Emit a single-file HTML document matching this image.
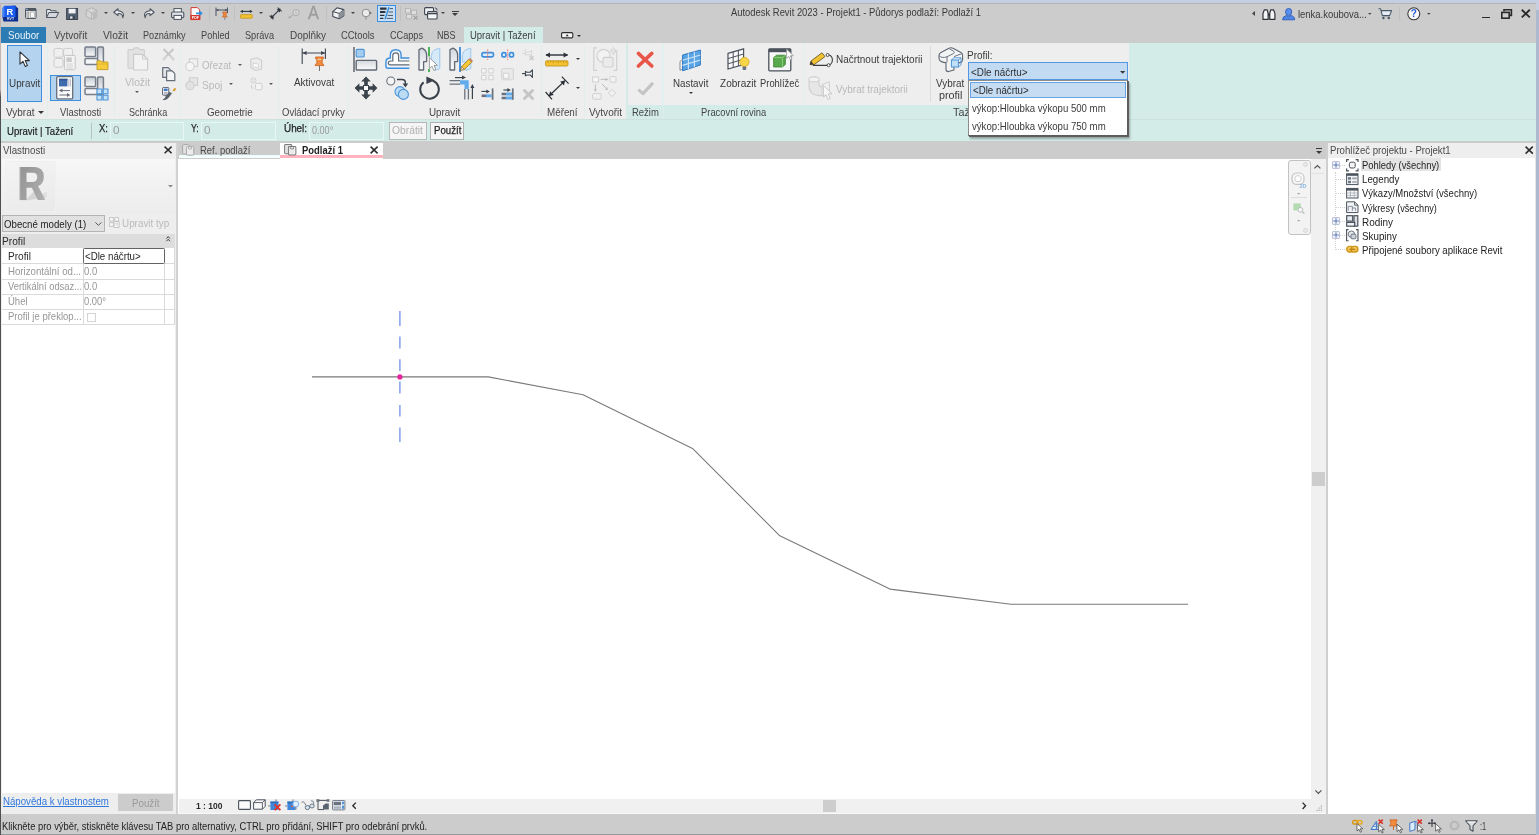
<!DOCTYPE html>
<html lang="cs">
<head>
<meta charset="utf-8">
<title>Autodesk Revit 2023 - Projekt1 - Půdorys podlaží: Podlaží 1</title>
<style>
html,body{margin:0;padding:0}
body{width:1539px;height:835px;position:relative;overflow:hidden;background:#fff;font-family:"Liberation Sans",sans-serif;font-size:10.5px;color:#3c3c3c;line-height:12px}
.a{position:absolute}
.t{position:absolute;white-space:nowrap;line-height:12px;transform-origin:0 0}
svg{position:absolute;overflow:visible}
svg.i{filter:blur(.3px)}
#topband{left:0;top:0;width:1539px;height:3px;background:#c6cfe1}
#titlebar{left:0;top:3px;width:1539px;height:40px;background:#cccccc;border-top:1px solid #b4b4b4;box-sizing:border-box}
#ribbon{left:1px;top:42.6px;width:1535px;height:76.4px;background:#d4ece8}
#optbar{left:1px;top:119px;width:1535px;height:22.3px;background:#d4ece8}
#optline{left:1px;top:141.3px;width:1535px;height:2px;background:#cbcbcb}
#ledge{left:0;top:3px;width:1.1px;height:832px;background:linear-gradient(#c4b4b0 0,#c4b4b0 86px,#505050 94px,#505050 100%)}
#redge{left:1536px;top:0;width:3px;height:835px;background:linear-gradient(#c6d0e2 0,#c6d0e2 10px,#adb9cf 10px,#adb9cf 100%)}
</style>
</head>
<body>
<div class="a" id="topband"></div>
<div class="a" id="titlebar"></div>
<div class="a" id="ribbon"></div>
<div class="a" id="optbar"></div>
<div class="a" id="optline"></div>
<!-- sec_title -->
<div class="t" style="left:730.6px;top:5.6px;font-size:10.5px;color:#3a3a3a;transform:scaleX(0.896);">Autodesk Revit 2023 - Projekt1 - Půdorys podlaží: Podlaží 1</div>
<svg class="i" style="left:2.4px;top:4.7px;" width="16.6" height="16.9" viewBox="0 0 17 17" preserveAspectRatio="none"><path d="M2 1.5 L13.5 0.5 L16.5 3.5 V16.5 H1.5 L0.5 12 Z" fill="#0c2f8f"/><path d="M0.5 3 L2.5 0.8 H13.8 V12 H0.5Z" fill="#1a5cf0"/><path d="M0.5 3 L2.5 0.8 V12 H0.5Z" fill="#4a86f7"/><text x="8" y="10" font-family="Liberation Sans,sans-serif" font-weight="bold" font-size="9.5" fill="#fff" text-anchor="middle">R</text><text x="8.8" y="15.6" font-family="Liberation Sans,sans-serif" font-weight="bold" font-size="3.6" fill="#dfe8ff" text-anchor="middle">RVT</text></svg>
<svg class="i" style="left:24.5px;top:8.0px;" width="11.5" height="11.0" viewBox="0 0 12 11" preserveAspectRatio="none"><rect x="0.5" y="0.5" width="11" height="10" rx="1" fill="#e8e8e8" stroke="#4d5560"/><rect x="0.5" y="0.5" width="11" height="2.4" fill="#4d5560"/><rect x="1" y="0.9" width="2" height="1" fill="#7db4e8"/><rect x="2" y="4" width="2" height="5.6" fill="#d0d0d0" stroke="#777" stroke-width=".5"/><rect x="5.5" y="4" width="4.5" height="5.6" fill="#f8f8f8" stroke="#888" stroke-width=".5"/></svg>
<svg class="i" style="left:46.0px;top:9.3px;" width="13.2" height="9.0" viewBox="0 0 13 9" preserveAspectRatio="none"><path d="M0.6 8.4V1.2Q0.6.6 1.2.6H4L5 1.8H9.4Q10 1.8 10 2.4V3.4" fill="#e4e6ea" stroke="#4d5560" stroke-width="1"/><path d="M0.6 8.4L3 3.4H12.5L10 8.4Z" fill="#d4d8de" stroke="#4d5560" stroke-width="1" stroke-linejoin="round"/></svg>
<svg class="i" style="left:65.5px;top:7.5px;" width="12.2" height="12.0" viewBox="0 0 12 12" preserveAspectRatio="none"><path d="M0.6 0.6H11.4V11.4H0.6Z" fill="#566274" stroke="#3e4652" stroke-width="1"/><rect x="2.6" y="0.8" width="6.8" height="4.6" fill="#f0f2f5"/><rect x="3.2" y="7.6" width="5.6" height="3.6" fill="#3e4652"/><rect x="4" y="8.4" width="2.4" height="2.2" fill="#e8eaee"/></svg>
<svg class="i" style="left:84.5px;top:7.0px;" width="13.0" height="13.0" viewBox="0 0 13 13" preserveAspectRatio="none"><path d="M6.5 0.8L11.8 3.2V9.4L6.5 12.2L1.2 9.4V3.2Z" fill="#d6d6d6" stroke="#b2b2b2" stroke-width="1"/><path d="M1.2 3.2L6.5 5.8L11.8 3.2M6.5 5.8V12.2" fill="none" stroke="#b2b2b2" stroke-width=".8"/><path d="M7 6.5L11.5 4.5V11.5L9 12.5Z" fill="#bcbcbc"/></svg>
<svg style="left:103.6px;top:12.2px" width="4.0" height="2.0" viewBox="0 0 4 2.0"><path d="M0 0H4L2.0 2.0Z" fill="#444"/></svg>
<svg class="i" style="left:113.0px;top:8.0px;" width="13.0" height="10.5" viewBox="0 0 13 10.5" preserveAspectRatio="none"><path d="M5 0.8L0.8 4.2L5 7.6V5.6Q9.6 5 9.8 9.8Q12.6 3.6 5 2.8Z" fill="#eceef0" stroke="#4d5560" stroke-width="1.1" stroke-linejoin="round"/></svg>
<svg style="left:131.4px;top:12.2px" width="4.0" height="2.0" viewBox="0 0 4 2.0"><path d="M0 0H4L2.0 2.0Z" fill="#444"/></svg>
<svg class="i" style="left:142.4px;top:8.0px;" width="13.0" height="10.5" viewBox="0 0 13 10.5" preserveAspectRatio="none"><path d="M8 0.8L12.2 4.2L8 7.6V5.6Q3.4 5 3.2 9.8Q0.4 3.6 8 2.8Z" fill="#eceef0" stroke="#4d5560" stroke-width="1.1" stroke-linejoin="round"/></svg>
<svg style="left:160.5px;top:12.2px" width="4.0" height="2.0" viewBox="0 0 4 2.0"><path d="M0 0H4L2.0 2.0Z" fill="#444"/></svg>
<svg class="i" style="left:170.6px;top:7.5px;" width="13.4" height="12.0" viewBox="0 0 13.4 12" preserveAspectRatio="none"><rect x="3" y="0.6" width="7.4" height="4" fill="#fafafa" stroke="#4d5560" stroke-width="1"/><rect x="0.6" y="4" width="12.2" height="5.6" rx="1.2" fill="#dfe2e6" stroke="#4d5560" stroke-width="1.1"/><rect x="3" y="7.4" width="7.4" height="4" fill="#fafafa" stroke="#4d5560" stroke-width="1"/></svg>
<svg class="i" style="left:190.0px;top:6.8px;" width="13.0" height="13.2" viewBox="0 0 13 13.2" preserveAspectRatio="none"><path d="M1 0.6H7.4L9.6 2.8V12.6H1Z" fill="#fdfdfd" stroke="#d23b2e" stroke-width="1"/><rect x="0.4" y="8" width="10" height="4.8" fill="#d6342a"/><text x="5.4" y="12" font-family="Liberation Sans,sans-serif" font-weight="bold" font-size="3.6" fill="#fff" text-anchor="middle">PDF</text><path d="M6 5.4H9.6V3.6L12.8 6.3L9.6 9V7.2H6Z" fill="#2f8fe0"/></svg>
<div class="a" style="left:209.3px;top:6.0px;width:1.0px;height:15.0px;background:#c0c0c0;"></div>
<svg class="i" style="left:215.0px;top:6.5px;" width="13.5" height="13.5" viewBox="0 0 13.5 13.5" preserveAspectRatio="none"><path d="M1 0.5V9M12.5 0.5V6M1 3H12.5" stroke="#4d5560" stroke-width="1" fill="none"/><path d="M1 3L3.4 1.8V4.2ZM12.5 3L10.1 1.8V4.2Z" fill="#4d5560"/><path d="M7.6 5H12V6H11.2V8.4L12.4 10H7.2L8.4 8.4V6H7.6Z" fill="#f08a3c" stroke="#c8601e" stroke-width=".6"/><path d="M9.8 10V13" stroke="#777" stroke-width=".8"/></svg>
<div class="a" style="left:234.0px;top:6.0px;width:1.0px;height:15.0px;background:#c0c0c0;"></div>
<svg class="i" style="left:240.0px;top:8.5px;" width="12.8" height="10.0" viewBox="0 0 12.8 10" preserveAspectRatio="none"><path d="M0.6 2.4H12.2" stroke="#30363e" stroke-width="1.1"/><path d="M0.3 2.4L3 0.8V4ZM12.5 2.4L9.8 0.8V4Z" fill="#30363e"/><rect x="0.5" y="5.6" width="11.8" height="3.6" rx=".6" fill="#f2c230" stroke="#c8961a" stroke-width=".8"/></svg>
<svg style="left:258.8px;top:12.2px" width="4.0" height="2.0" viewBox="0 0 4 2.0"><path d="M0 0H4L2.0 2.0Z" fill="#444"/></svg>
<svg class="i" style="left:268.8px;top:7.0px;" width="13.2" height="13.0" viewBox="0 0 13 13" preserveAspectRatio="none"><path d="M2.4 10.6L10.6 2.4" stroke="#30363e" stroke-width="1.1"/><path d="M0.6 8.6L4.4 12.4M8.6 0.6L12.4 4.4" stroke="#30363e" stroke-width="1"/><path d="M1.6 11.4L2.4 7.6L5.4 10.6ZM11.4 1.6L10.6 5.4L7.6 2.4Z" fill="#30363e"/></svg>
<svg class="i" style="left:288.0px;top:8.5px;" width="12.0" height="10.0" viewBox="0 0 12 10" preserveAspectRatio="none"><circle cx="8" cy="3.6" r="3.1" fill="#d8d8d8" stroke="#a8a8a8" stroke-width=".9"/><path d="M5.4 5.6L1.4 8.6" stroke="#a8a8a8" stroke-width="1"/><path d="M0.4 9.6L1 6.8L3.2 8.8Z" fill="#a8a8a8"/><text x="8" y="5.2" font-family="Liberation Sans,sans-serif" font-size="4.4" fill="#999" text-anchor="middle">1</text></svg>
<div class="t" style="left:307.6px;top:4.3px;font-size:17.5px;line-height:18px;color:#9c9c9c;transform:scaleX(.93);-webkit-text-stroke:.3px #9c9c9c">A</div>
<div class="a" style="left:326.0px;top:6.0px;width:1.0px;height:15.0px;background:#c0c0c0;"></div>
<svg class="i" style="left:331.8px;top:7.0px;" width="12.6" height="12.6" viewBox="0 0 12.6 12.6" preserveAspectRatio="none"><path d="M0.8 4.6L5 0.8L11.8 2.6V8.8L7.2 11.8L0.8 9.6Z" fill="#f2f2f2" stroke="#3e4652" stroke-width="1.1" stroke-linejoin="round"/><path d="M0.8 4.6L7.2 6.4L11.8 2.6M7.2 6.4V11.8" fill="none" stroke="#3e4652" stroke-width="1"/><path d="M7.2 6.4L11.8 2.6V8.8L7.2 11.8Z" fill="#8a9098"/></svg>
<svg style="left:351.0px;top:12.2px" width="4.0" height="2.0" viewBox="0 0 4 2.0"><path d="M0 0H4L2.0 2.0Z" fill="#444"/></svg>
<svg class="i" style="left:360.5px;top:7.5px;" width="11.5" height="12.0" viewBox="0 0 11.5 12" preserveAspectRatio="none"><circle cx="5" cy="5" r="3.8" fill="#ececec" stroke="#8c8c8c" stroke-width="1"/><path d="M8.6 3.4L11 5L8.6 6.6Z" fill="#707070"/><path d="M5 8.8V11.6" stroke="#8c8c8c" stroke-width="1"/></svg>
<div class="a" style="left:377.0px;top:4.5px;width:19.0px;height:17.0px;background:#c9e0f7;box-sizing:border-box;border:1px solid #3b8fe0;"></div>
<svg class="i" style="left:380.0px;top:7.0px;" width="13.2" height="12.2" viewBox="0 0 13.2 12.2" preserveAspectRatio="none"><path d="M0 1.6H6.5M0 5H5.4" stroke="#2c3138" stroke-width="2.2"/><path d="M0 8.4H4.4M0 11.4H3.4" stroke="#2c3138" stroke-width="1.2"/><path d="M9.6 1.6H13M8.6 5H13M7.6 8.4H13M6.6 11.4H13" stroke="#2c3138" stroke-width=".8"/><path d="M9 0L5 12.2" stroke="#2f8fe0" stroke-width="1.4"/></svg>
<div class="a" style="left:400.0px;top:6.0px;width:1.0px;height:15.0px;background:#c0c0c0;"></div>
<svg class="i" style="left:405.0px;top:7.5px;" width="13.5" height="12.0" viewBox="0 0 13.5 12" preserveAspectRatio="none"><rect x="0.5" y="0.5" width="5" height="4.4" fill="#dedede" stroke="#b0b0b0" stroke-width=".8"/><rect x="6.6" y="2.2" width="5" height="4.4" fill="#dedede" stroke="#b0b0b0" stroke-width=".8"/><rect x="1.4" y="6.4" width="5" height="4.4" fill="#dedede" stroke="#b0b0b0" stroke-width=".8"/><path d="M8.6 8L12.6 11.6M12.6 8L8.6 11.6" stroke="#a0a0a0" stroke-width="1.1"/></svg>
<svg class="i" style="left:423.5px;top:6.8px;" width="13.9" height="12.8" viewBox="0 0 14 12.8" preserveAspectRatio="none"><rect x="0.6" y="0.6" width="9" height="7" rx="1" fill="#eef0f2" stroke="#3e4652" stroke-width="1.1"/><rect x="3.6" y="4.6" width="9.6" height="7.4" rx="1" fill="#f6f7f8" stroke="#3e4652" stroke-width="1.1"/><path d="M3.6 6.6H13.2" stroke="#3e4652" stroke-width="1.4"/><path d="M11 0.8Q13.4 1 13.2 3.4" fill="none" stroke="#3e4652" stroke-width=".9"/></svg>
<svg style="left:441.3px;top:12.2px" width="4.0" height="2.0" viewBox="0 0 4 2.0"><path d="M0 0H4L2.0 2.0Z" fill="#444"/></svg>
<div class="a" style="left:452.0px;top:10.6px;width:6.6px;height:1.2px;background:#3c3c3c;"></div>
<svg style="left:452.3px;top:13.1px" width="6.0" height="3.0" viewBox="0 0 6 3.0"><path d="M0 0H6L3.0 3.0Z" fill="#3c3c3c"/></svg>
<svg style="left:1252.4px;top:10.6px" width="3" height="5" viewBox="0 0 3 5"><path d="M3 0V5L0 2.5Z" fill="#444"/></svg>
<svg class="i" style="left:1261.7px;top:8.5px;" width="13.9" height="11.0" viewBox="0 0 14 11" preserveAspectRatio="none"><path d="M1 10.4V4.4L2.4 0.8H5.2L6.2 4.4V10.4ZM7.8 10.4V4.4L8.8 0.8H11.6L13 4.4V10.4Z" fill="#f4f4f4" stroke="#2c3138" stroke-width="1.2" stroke-linejoin="round"/><path d="M6.2 4.2H7.8V7H6.2Z" fill="#2c3138"/></svg>
<svg class="i" style="left:1281.7px;top:7.6px;" width="13.3" height="12.2" viewBox="0 0 13.3 12.2" preserveAspectRatio="none"><path d="M0.6 11.8Q0.6 8.2 4.6 7.4L6.6 8.8L8.6 7.4Q12.7 8.2 12.7 11.8Z" fill="#4f86e8" stroke="#2552b0" stroke-width=".8"/><ellipse cx="6.65" cy="3.9" rx="3.1" ry="3.5" fill="#5a90f0" stroke="#2552b0" stroke-width=".8"/></svg>
<div class="t" style="left:1298.1px;top:7.6px;font-size:10.5px;color:#3a3a3a;transform:scaleX(0.900);">lenka.koubova...</div>
<svg style="left:1367.8px;top:12.5px" width="3.6" height="1.8" viewBox="0 0 3.6 1.8"><path d="M0 0H3.6L1.8 1.8Z" fill="#444"/></svg>
<svg class="i" style="left:1378.0px;top:8.0px;" width="14.6" height="11.6" viewBox="0 0 14.6 11.6" preserveAspectRatio="none"><path d="M0.4 0.8H2.6L4.4 7.6H11.6L13.6 2.6H3.2" fill="#e8eef8" stroke="#4a5868" stroke-width="1.1" stroke-linejoin="round"/><circle cx="5.4" cy="10" r="1.2" fill="#4a5868"/><circle cx="10.8" cy="10" r="1.2" fill="#4a5868"/></svg>
<div class="a" style="left:1399.4px;top:7.0px;width:1.0px;height:13.0px;background:#c0c0c0;"></div>
<svg class="i" style="left:1406.6px;top:7.4px;" width="13.6" height="13.6" viewBox="0 0 13.6 13.6" preserveAspectRatio="none"><circle cx="6.8" cy="6.8" r="6" fill="#f8f8f8" stroke="#3a3a3a" stroke-width="1.1"/><text x="6.8" y="10.4" font-family="Liberation Sans,sans-serif" font-weight="bold" font-size="10" fill="#2a62d8" text-anchor="middle">?</text></svg>
<svg style="left:1426.6px;top:12.5px" width="3.6" height="1.8" viewBox="0 0 3.6 1.8"><path d="M0 0H3.6L1.8 1.8Z" fill="#444"/></svg>
<div class="a" style="left:1482.0px;top:16.8px;width:7.6px;height:1.7px;background:#2a2a2a;"></div>
<svg class="i" style="left:1500.8px;top:8.6px;" width="11.2" height="10.0" viewBox="0 0 11.2 10" preserveAspectRatio="none"><path d="M3 2.6V0.8H10.4V6.4H8.4" fill="none" stroke="#2a2a2a" stroke-width="1.6"/><rect x="0.8" y="3.4" width="7.4" height="5.8" fill="none" stroke="#2a2a2a" stroke-width="1.6"/></svg>
<svg class="i" style="left:1521.3px;top:9.0px;" width="9.6" height="9.2" viewBox="0 0 9.6 9.2" preserveAspectRatio="none"><path d="M0.8 0.8L8.8 8.4M8.8 0.8L0.8 8.4" stroke="#2a2a2a" stroke-width="1.9"/></svg>
<!-- sec_tabs -->
<div class="a" style="left:1.0px;top:27.0px;width:45.0px;height:15.5px;background:#2b7cb5;"></div>
<div class="t" style="left:7.5px;top:29.0px;font-size:10.5px;color:#eaf3fa;transform:scaleX(0.926);">Soubor</div>
<div class="t" style="left:54.4px;top:29.0px;font-size:10.5px;color:#454545;transform:scaleX(0.961);">Vytvořit</div>
<div class="t" style="left:103.0px;top:29.0px;font-size:10.5px;color:#454545;transform:scaleX(0.980);">Vložit</div>
<div class="t" style="left:143.0px;top:29.0px;font-size:10.5px;color:#454545;transform:scaleX(0.870);">Poznámky</div>
<div class="t" style="left:200.8px;top:29.0px;font-size:10.5px;color:#454545;transform:scaleX(0.879);">Pohled</div>
<div class="t" style="left:245.3px;top:29.0px;font-size:10.5px;color:#454545;transform:scaleX(0.873);">Správa</div>
<div class="t" style="left:289.8px;top:29.0px;font-size:10.5px;color:#454545;transform:scaleX(0.950);">Doplňky</div>
<div class="t" style="left:341.1px;top:29.0px;font-size:10.5px;color:#454545;transform:scaleX(0.896);">CCtools</div>
<div class="t" style="left:389.6px;top:29.0px;font-size:10.5px;color:#454545;transform:scaleX(0.869);">CCapps</div>
<div class="t" style="left:437.0px;top:29.0px;font-size:10.5px;color:#454545;transform:scaleX(0.859);">NBS</div>
<div class="a" style="left:464.0px;top:27.0px;width:79.0px;height:16.4px;background:#d4ece8;"></div>
<div class="t" style="left:470.2px;top:29.0px;font-size:10.5px;color:#3c3c3c;transform:scaleX(0.903);">Upravit | Tažení</div>
<svg class="i" style="left:561.0px;top:32.3px;" width="12.4" height="6.5" viewBox="0 0 12.4 6.5" preserveAspectRatio="none"><rect x="0.6" y="0.6" width="11.2" height="5.3" rx="1.2" fill="#f4f4f4" stroke="#2c2c2c" stroke-width="1.1"/><path d="M4.6 4.2H7.8L6.2 2.2Z" fill="#2c2c2c"/></svg>
<svg style="left:577.4px;top:34.8px" width="4.0" height="2.0" viewBox="0 0 4 2.0"><path d="M0 0H4L2.0 2.0Z" fill="#2c2c2c"/></svg>
<!-- sec_ribbon -->
<div class="a" style="left:1.0px;top:43.4px;width:625.0px;height:75.6px;background:#eeeeee;"></div>
<div class="a" style="left:47.2px;top:45.0px;width:1.0px;height:72.0px;background:#e2eeec;"></div>
<div class="a" style="left:113.8px;top:45.0px;width:1.0px;height:72.0px;background:#e2eeec;"></div>
<div class="a" style="left:180.0px;top:45.0px;width:1.0px;height:72.0px;background:#e2eeec;"></div>
<div class="a" style="left:277.5px;top:45.0px;width:1.0px;height:72.0px;background:#e2eeec;"></div>
<div class="a" style="left:348.0px;top:45.0px;width:1.0px;height:72.0px;background:#e2eeec;"></div>
<div class="a" style="left:540.5px;top:45.0px;width:1.0px;height:72.0px;background:#e2eeec;"></div>
<div class="a" style="left:584.0px;top:45.0px;width:1.0px;height:72.0px;background:#e2eeec;"></div>
<div class="a" style="left:628.0px;top:43.4px;width:501.0px;height:61.2px;background:#eeeeee;"></div>
<div class="a" style="left:662.0px;top:43.4px;width:2.0px;height:61.2px;background:#e1f1ef;"></div>
<div class="a" style="left:662.0px;top:104.6px;width:2.0px;height:14.4px;background:#d9eeeb;"></div>
<div class="a" style="left:804.0px;top:43.4px;width:1.4px;height:61.2px;background:#dff0ee;"></div>
<div class="a" style="left:628.0px;top:104.6px;width:34.0px;height:14.4px;background:#d4ece8;"></div>
<div class="t" style="left:5.8px;top:106.1px;font-size:10.5px;color:#454545;transform:scaleX(0.950);">Vybrat</div>
<svg style="left:38.0px;top:111.3px" width="6.0" height="3.0" viewBox="0 0 6 3.0"><path d="M0 0H6L3.0 3.0Z" fill="#3a3a3a"/></svg>
<div class="t" style="left:60.4px;top:106.1px;font-size:10.5px;color:#454545;transform:scaleX(0.904);">Vlastnosti</div>
<div class="t" style="left:128.8px;top:106.1px;font-size:10.5px;color:#454545;transform:scaleX(0.860);">Schránka</div>
<div class="t" style="left:206.8px;top:106.1px;font-size:10.5px;color:#454545;transform:scaleX(0.933);">Geometrie</div>
<div class="t" style="left:282.4px;top:106.1px;font-size:10.5px;color:#454545;transform:scaleX(0.904);">Ovládací prvky</div>
<div class="t" style="left:429.1px;top:106.1px;font-size:10.5px;color:#454545;transform:scaleX(0.937);">Upravit</div>
<div class="t" style="left:547.0px;top:106.1px;font-size:10.5px;color:#454545;transform:scaleX(0.935);">Měření</div>
<div class="t" style="left:589.0px;top:106.1px;font-size:10.5px;color:#454545;transform:scaleX(0.955);">Vytvořit</div>
<div class="t" style="left:632.4px;top:106.1px;font-size:10.5px;color:#454545;transform:scaleX(0.902);">Režim</div>
<div class="t" style="left:701.1px;top:106.1px;font-size:10.5px;color:#454545;transform:scaleX(0.893);">Pracovní rovina</div>
<div class="t" style="left:953.4px;top:106.1px;font-size:10.5px;color:#454545;transform:scaleX(1.026);">Tažení</div>
<div class="a" style="left:7.0px;top:45.0px;width:35.4px;height:57.0px;background:#b3d3ef;box-sizing:border-box;border:1px solid #3f8fe0;"></div>
<svg class="i" style="left:19.0px;top:51.0px;" width="11.4" height="16.4" viewBox="0 0 11.4 16.4" preserveAspectRatio="none"><path d="M1 0.8V13.2L4 10.4L6.2 15.4L8.4 14.4L6.2 9.6H10.4Z" fill="#fff" stroke="#2c3138" stroke-width="1.1" stroke-linejoin="round"/></svg>
<div class="t" style="left:8.8px;top:76.8px;font-size:10.5px;color:#3a3a3a;transform:scaleX(0.940);">Upravit</div>
<svg class="i" style="left:53.0px;top:47.0px;" width="23.6" height="23.6" viewBox="0 0 23.6 23.6" preserveAspectRatio="none"><rect x="1" y="1.4" width="9" height="8.8" rx="1.8" fill="#f0f0f0" stroke="#cbcbcb"/><rect x="10.6" y="1.4" width="9" height="8.8" rx="1.8" fill="#f0f0f0" stroke="#cbcbcb"/><rect x="1" y="11.4" width="9" height="8.8" rx="1.8" fill="#f0f0f0" stroke="#cbcbcb"/><rect x="11.4" y="8.4" width="10.8" height="14.4" rx="1" fill="#f4f4f4" stroke="#c4c4c4" stroke-width="1"/><rect x="13.4" y="10.4" width="5.4" height="4.6" fill="#cacaca"/><path d="M13.4 17H20M13.4 19H20M13.4 21H20" stroke="#cacaca" stroke-width=".8"/></svg>
<svg class="i" style="left:84.0px;top:46.0px;" width="24.6" height="24.6" viewBox="0 0 24.6 24.6" preserveAspectRatio="none"><defs><linearGradient id="fg1" x1="0" y1="0" x2="0" y2="1"><stop offset="0" stop-color="#c4c9d2"/><stop offset="1" stop-color="#fbfbfc"/></linearGradient></defs><rect x="1" y="1" width="10.6" height="9.6" rx="1" fill="url(#fg1)" stroke="#767e8a" stroke-width="1.5"/><rect x="13.6" y="1" width="5.8" height="17.6" rx="1" fill="url(#fg1)" stroke="#767e8a" stroke-width="1.5"/><rect x="1" y="12.4" width="12.6" height="6.2" rx="1" fill="#f4f5f7" stroke="#767e8a" stroke-width="1.5"/><path d="M13 23.6V15.4Q13 14.8 13.6 14.8H17L18.2 16H23.4Q24 16 24 16.6V23.6Z" fill="#f6cb3c" stroke="#c49a22" stroke-width=".9"/><path d="M13.4 18H23.8" stroke="#e0b02a" stroke-width=".8"/></svg>
<div class="a" style="left:50.0px;top:74.5px;width:30.6px;height:26.5px;background:#b3d3ef;box-sizing:border-box;border:1px solid #3f8fe0;"></div>
<svg class="i" style="left:56.0px;top:76.0px;" width="17.4" height="23.6" viewBox="0 0 17.4 23.6" preserveAspectRatio="none"><rect x="0.7" y="0.7" width="16" height="22.2" rx="1.2" fill="#fafafa" stroke="#666e7a" stroke-width="1.3"/><rect x="3" y="2.8" width="8.4" height="7.6" fill="#3f6cad"/><rect x="3" y="2.8" width="8.4" height="1.6" fill="#2f548c"/><path d="M12.8 2.8V10.4M14.4 2.8V10.4" stroke="#b0b6be" stroke-width=".9"/><path d="M5.4 14.6H14M3.4 19H12" stroke="#666e7a" stroke-width="1"/><path d="M3 14.6L6.4 12.6V16.6ZM14.4 19L11 17V21Z" fill="#666e7a"/></svg>
<svg class="i" style="left:84.0px;top:76.0px;" width="24.6" height="24.6" viewBox="0 0 24.6 24.6" preserveAspectRatio="none"><defs><linearGradient id="fg2" x1="0" y1="0" x2="0" y2="1"><stop offset="0" stop-color="#c4c9d2"/><stop offset="1" stop-color="#fbfbfc"/></linearGradient></defs><rect x="1" y="1" width="10.6" height="9.6" rx="1" fill="url(#fg2)" stroke="#767e8a" stroke-width="1.5"/><rect x="13.6" y="1" width="5.8" height="17.6" rx="1" fill="url(#fg2)" stroke="#767e8a" stroke-width="1.5"/><rect x="1" y="12.4" width="12.6" height="6.2" rx="1" fill="#f4f5f7" stroke="#767e8a" stroke-width="1.5"/><path d="M13 13H17.8V17.8H13ZM19.2 13H24V17.8H19.2ZM13 19.2H17.8V24H13ZM19.2 19.2H24V24H19.2Z" fill="#c4e2f6" stroke="#4c94d8" stroke-width="1.1" stroke-linejoin="round"/></svg>
<svg class="i" style="left:127.0px;top:47.0px;" width="22.0" height="23.6" viewBox="0 0 22 23.6" preserveAspectRatio="none"><path d="M1 3.4Q1 2.6 2 2.6H6Q7 0.6 9.4 0.6Q11.8 0.6 12.8 2.6H16.4Q17.4 2.6 17.4 3.4V20.4Q17.4 21.2 16.4 21.2H2Q1 21.2 1 20.4Z" fill="#e2e2e2" stroke="#cfcfcf" stroke-width="1.1"/><path d="M6.6 7.4H15.6L20.6 12V22Q20.6 23 19.6 23H7.6Q6.6 23 6.6 22Z" fill="#f2f2f2" stroke="#cacaca" stroke-width="1.1"/><path d="M15.6 7.4V12H20.6" fill="none" stroke="#cacaca" stroke-width="1"/></svg>
<div class="t" style="left:124.8px;top:76.2px;font-size:10.5px;color:#b9b9b9;transform:scaleX(0.980);">Vložit</div>
<svg style="left:135.2px;top:91.2px" width="4.0" height="2.0" viewBox="0 0 4 2.0"><path d="M0 0H4L2.0 2.0Z" fill="#5a5a5a"/></svg>
<svg class="i" style="left:161.5px;top:48.0px;" width="13.0" height="12.5" viewBox="0 0 13 12.5" preserveAspectRatio="none"><path d="M1.6 1L9 8.6M11.4 1L4 8.6" stroke="#c6c6c6" stroke-width="2"/><path d="M9 8.6L11.4 11.4M4 8.6L1.6 11.4" stroke="#d4d4d4" stroke-width="2.4" stroke-linecap="round"/></svg>
<svg class="i" style="left:161.5px;top:67.0px;" width="13.5" height="14.4" viewBox="0 0 13.5 14.4" preserveAspectRatio="none"><path d="M0.7 0.7H6.2L8.8 3.4V10.4H0.7Z" fill="#e4e6ea" stroke="#666e7a" stroke-width="1.2" stroke-linejoin="round"/><path d="M4.6 3.8H10L12.8 6.6V13.7H4.6Z" fill="#f4f5f7" stroke="#666e7a" stroke-width="1.2" stroke-linejoin="round"/></svg>
<svg class="i" style="left:161.5px;top:87.0px;" width="13.9" height="13.6" viewBox="0 0 13.9 13.6" preserveAspectRatio="none"><rect x="0.6" y="0.6" width="6.2" height="7.6" rx=".6" fill="#fff" stroke="#5a626e" stroke-width="1"/><rect x="1.8" y="1.6" width="3.8" height="2.4" fill="#3f78c8"/><path d="M1.8 5.4H5.6M1.8 6.8H5.6" stroke="#7a8490" stroke-width=".7"/><path d="M13.6 1.4L11 4.4" stroke="#d89a2c" stroke-width="2"/><path d="M11.4 4L9 6.8" stroke="#e8e8e8" stroke-width="2.2"/><path d="M9.6 6.2L7.4 9.4Q5.6 12.4 1 13Q3.8 11 4.4 8.4L7.4 5.4Z" fill="#5a626e" stroke="#3e4652" stroke-width=".5"/></svg>
<svg class="i" style="left:185.0px;top:58.0px;" width="13.4" height="13.4" viewBox="0 0 13.4 13.4" preserveAspectRatio="none"><rect x="4.4" y="0.8" width="8.2" height="7.6" fill="#f0f0f0" stroke="#cfcfcf" stroke-width="1.1"/><circle cx="5" cy="8.4" r="4.2" fill="#f6f6f6" stroke="#cfcfcf" stroke-width="1.1"/></svg>
<div class="t" style="left:202.2px;top:59.4px;font-size:10.5px;color:#b9b9b9;transform:scaleX(0.931);">Ořezat</div>
<svg style="left:237.8px;top:64.2px" width="4.0" height="2.0" viewBox="0 0 4 2.0"><path d="M0 0H4L2.0 2.0Z" fill="#5a5a5a"/></svg>
<svg class="i" style="left:250.0px;top:57.0px;" width="12.4" height="14.4" viewBox="0 0 12.4 14.4" preserveAspectRatio="none"><path d="M0.8 2.4L7 0.8L11.6 3.4V12L6 13.6L0.8 10.8Z" fill="#ececec" stroke="#cfcfcf" stroke-width="1.1" stroke-linejoin="round"/><path d="M3 6L8.4 7V11L3 9.8Z" fill="#f8f8f8" stroke="#cfcfcf" stroke-width=".8"/></svg>
<svg class="i" style="left:185.0px;top:77.3px;" width="13.4" height="13.7" viewBox="0 0 13.4 13.7" preserveAspectRatio="none"><rect x="4.4" y="0.8" width="8.2" height="7.6" fill="#e6e6e6" stroke="#cfcfcf" stroke-width="1.1"/><circle cx="5" cy="8.6" r="4.2" fill="#e2e2e2" stroke="#cfcfcf" stroke-width="1.1"/></svg>
<div class="t" style="left:202.2px;top:79.1px;font-size:10.5px;color:#b9b9b9;transform:scaleX(0.968);">Spoj</div>
<svg style="left:229.0px;top:83.4px" width="4.0" height="2.0" viewBox="0 0 4 2.0"><path d="M0 0H4L2.0 2.0Z" fill="#5a5a5a"/></svg>
<svg class="i" style="left:250.0px;top:77.0px;" width="12.8" height="13.6" viewBox="0 0 12.8 13.6" preserveAspectRatio="none"><circle cx="3.4" cy="3.4" r="2.6" fill="#f2f2f2" stroke="#cfcfcf" stroke-width="1"/><path d="M2 2L4.8 4.8M4.8 2L2 4.8" stroke="#cfcfcf" stroke-width=".8"/><rect x="5.6" y="6.4" width="6.4" height="6.4" rx="1" fill="#f4f4f4" stroke="#cfcfcf" stroke-width="1"/><path d="M1.4 8V11H3.6" fill="none" stroke="#cfcfcf" stroke-width=".9"/></svg>
<svg style="left:268.7px;top:83.4px" width="4.0" height="2.0" viewBox="0 0 4 2.0"><path d="M0 0H4L2.0 2.0Z" fill="#5a5a5a"/></svg>
<svg class="i" style="left:301.0px;top:48.0px;" width="25.6" height="23.4" viewBox="0 0 25.6 23.4" preserveAspectRatio="none"><path d="M1.2 0.6V16M24.4 0.6V11M1.2 5H24.4" stroke="#3e4652" stroke-width="1.1" fill="none"/><path d="M1.4 5L5.6 3V7ZM24.2 5L20 3V7Z" fill="#3e4652"/><path d="M14.6 9H22.4V10.8H21.2V14.8L23 17.6H14L15.8 14.8V10.8H14.6Z" fill="#f28c40" stroke="#c8601e" stroke-width=".8"/><path d="M16.6 11.4H20.2" stroke="#fbd0a8" stroke-width="1"/><path d="M18.5 17.6V23" stroke="#707070" stroke-width="1"/></svg>
<div class="t" style="left:293.9px;top:75.9px;font-size:10.5px;color:#3a3a3a;transform:scaleX(0.945);">Aktivovat</div>
<!-- sec_ribbon2 -->
<svg class="i" style="left:353.0px;top:47.0px;" width="24.4" height="25.0" viewBox="0 0 24.4 25" preserveAspectRatio="none"><defs><linearGradient id="uga" x1="0" y1="0" x2="0" y2="1"><stop offset="0" stop-color="#d4d8de"/><stop offset="1" stop-color="#fcfcfd"/></linearGradient></defs><path d="M1 0V25" stroke="#4a525c" stroke-width="1.3"/><rect x="3.2" y="2.4" width="8" height="7.6" rx="1" fill="#a4cdf0" stroke="#4c94d8" stroke-width="1.1"/><rect x="3.2" y="13.4" width="20.4" height="9.6" rx=".8" fill="url(#uga)" stroke="#626a76" stroke-width="1.4"/></svg>
<svg class="i" style="left:385.0px;top:47.0px;" width="24.4" height="25.0" viewBox="0 0 24.4 25" preserveAspectRatio="none"><path d="M24.4 11H16.1V8.2Q16.1 2.7 10.7 2.7Q5.3 2.7 5.3 8.2V11Q0.9 11 0.9 15.4V19Q0.9 21.2 3 21.2H24.4" fill="#eef5fb" stroke="#3f8fdc" stroke-width="1.4"/><path d="M24.4 14H13.6V8.4Q13.6 5.9 10.7 5.9Q7.8 5.9 7.8 8.4V14H5.6Q3.3 14 3.3 16Q3.3 17.8 5.6 17.8H24.4" fill="#fcfcfc" stroke="#626a76" stroke-width="1.2"/></svg>
<svg class="i" style="left:418.0px;top:47.0px;" width="23.0" height="25.0" viewBox="0 0 23 25" preserveAspectRatio="none"><defs><linearGradient id="ugb" x1="0" y1="0" x2="0" y2="1"><stop offset="0" stop-color="#d4d8de"/><stop offset="1" stop-color="#fcfcfd"/></linearGradient></defs><path d="M1 23V2.6L4 1.2Q8.6 3.4 8.6 8V14.6H5.6V23Z" fill="url(#ugb)" stroke="#626a76" stroke-width="1.3" stroke-linejoin="round"/><path d="M13.4 8.6Q13.4 4.6 17 2.6L21.8 1.2V21.6L16.8 23.6V15H13.4Z" fill="#d6e9f8" stroke="#9cc8ee" stroke-width="1" stroke-linejoin="round"/><path d="M11 0V9.6M11 22V25" stroke="#3fae48" stroke-width="1.8"/><path d="M11.4 10.6V21.6L14 19.2L15.8 23.4L17.8 22.4L16 18.4H19.4Z" fill="#fff" stroke="#8a8a8a" stroke-width=".8" stroke-linejoin="round"/></svg>
<svg class="i" style="left:449.0px;top:47.0px;" width="24.0" height="25.0" viewBox="0 0 24 25" preserveAspectRatio="none"><defs><linearGradient id="ugc" x1="0" y1="0" x2="0" y2="1"><stop offset="0" stop-color="#d4d8de"/><stop offset="1" stop-color="#fcfcfd"/></linearGradient></defs><path d="M1 23V2.6L4 1.2Q8.6 3.4 8.6 8V14.6H5.6V23Z" fill="url(#ugc)" stroke="#626a76" stroke-width="1.3" stroke-linejoin="round"/><path d="M13.4 8.6Q13.4 4.6 17 2.6L21.8 1.2V21.6L16.8 23.6V15H13.4Z" fill="#d6e9f8" stroke="#9cc8ee" stroke-width="1" stroke-linejoin="round"/><path d="M11 0V25" stroke="#3f8fdc" stroke-width="1.9"/><path d="M11.4 23.4L12.6 19.6L19.8 12.2L22.8 15.2L15.4 22.4Z" fill="#f6c83a" stroke="#8a6a14" stroke-width=".7" stroke-linejoin="round"/><path d="M11.4 23.4L12.6 19.6L15.4 22.4Z" fill="#f0dcc0" stroke="#5a4a2a" stroke-width=".5"/><path d="M19.8 12.2L21 11L24 14L22.8 15.2Z" fill="#c87a5a"/></svg>
<svg class="i" style="left:354.0px;top:76.0px;" width="24.0" height="24.0" viewBox="0 0 24 24" preserveAspectRatio="none"><path d="M12 0.6L16.8 5.4H13.8V10.2H18.6V7.2L23.4 12L18.6 16.8V13.8H13.8V18.6H16.8L12 23.4L7.2 18.6H10.2V13.8H5.4V16.8L0.6 12L5.4 7.2V10.2H10.2V5.4H7.2Z" fill="#3a424c"/><rect x="9.5" y="9.5" width="5" height="5" fill="#fff" stroke="#3a424c" stroke-width="1"/></svg>
<svg class="i" style="left:386.0px;top:76.0px;" width="23.0" height="24.0" viewBox="0 0 23 24" preserveAspectRatio="none"><circle cx="4.8" cy="5" r="4" fill="#f4f4f4" stroke="#6a727e" stroke-width="1.1"/><path d="M11 3.6H16Q19.4 3.6 19.4 7V8" fill="none" stroke="#3a424c" stroke-width="1.5"/><path d="M19.4 11.4L16.6 7.4H22.2Z" fill="#3a424c"/><circle cx="14" cy="15.6" r="5" fill="#bcdcf4" stroke="#4c94d8" stroke-width="1.1"/><circle cx="17.4" cy="18.4" r="5" fill="#bcdcf4" stroke="#4c94d8" stroke-width="1.1"/></svg>
<svg class="i" style="left:418.0px;top:76.0px;" width="23.0" height="24.0" viewBox="0 0 23 24" preserveAspectRatio="none"><path d="M14.6 4.6A9.3 9.3 0 1 1 5.6 6.2" fill="none" stroke="#3a424c" stroke-width="2"/><path d="M8.4 0.4L16.8 4.2L8.4 8Z" fill="#3a424c"/></svg>
<svg class="i" style="left:449.0px;top:76.0px;" width="25.0" height="24.0" viewBox="0 0 25 24" preserveAspectRatio="none"><path d="M0.6 4.6H11M0.6 8.2H11" stroke="#6a727e" stroke-width="1.3"/><path d="M6 1.6H14" stroke="#3a424c" stroke-width="1.2"/><path d="M17 1.6L13 -0.4V3.6Z" fill="#3a424c"/><path d="M11 6.4H17.6V13" fill="none" stroke="#62acec" stroke-width="4.2"/><path d="M15.8 13V23.4M19.4 13V23.4" stroke="#6a727e" stroke-width="1.3"/><path d="M23.4 23V11" stroke="#3a424c" stroke-width="1.2"/><path d="M23.4 8L21.4 12H25.4Z" fill="#3a424c"/></svg>
<svg class="i" style="left:481.0px;top:50.0px;" width="13.4" height="9.4" viewBox="0 0 13.4 9.4" preserveAspectRatio="none"><rect x="0.9" y="2.6" width="11.6" height="4.2" rx="1.6" fill="#dcecf9" stroke="#3f8fdc" stroke-width="1.7"/><path d="M6.7 -0.6V10" stroke="#e8685c" stroke-width="1" stroke-dasharray="1.4 1"/></svg>
<svg class="i" style="left:501.0px;top:50.0px;" width="13.4" height="9.4" viewBox="0 0 13.4 9.4" preserveAspectRatio="none"><rect x="0.9" y="2.6" width="4" height="4.2" rx="1.4" fill="#dcecf9" stroke="#3f8fdc" stroke-width="1.7"/><rect x="8.5" y="2.6" width="4" height="4.2" rx="1.4" fill="#dcecf9" stroke="#3f8fdc" stroke-width="1.7"/><path d="M6.7 -0.6V10" stroke="#e8685c" stroke-width="1" stroke-dasharray="1.4 1"/></svg>
<svg class="i" style="left:522.0px;top:48.6px;" width="12.4" height="11.4" viewBox="0 0 12.4 11.4" preserveAspectRatio="none"><path d="M3 0V2M0.6 4.4H3.6M3.6 2.4L5 3.2H8L9.6 1.2V7.6L8 5.6H5L3.6 6.4Z" fill="#f2f2f2" stroke="#d2d2d2" stroke-width=".9" stroke-linejoin="round"/><path d="M7.6 7.2L11.6 11M11.6 7.2L7.6 11" stroke="#c8c8c8" stroke-width="1.3"/></svg>
<svg class="i" style="left:481.0px;top:68.0px;" width="13.0" height="12.4" viewBox="0 0 13 12.4" preserveAspectRatio="none"><path d="M0.6 0.6H5V5H0.6ZM7.8 0.6H12.2V5H7.8ZM0.6 7.4H5V11.8H0.6ZM7.8 7.4H12.2V11.8H7.8Z" fill="#f4f4f4" stroke="#d2d2d2" stroke-width="1"/></svg>
<svg class="i" style="left:501.0px;top:68.0px;" width="13.0" height="12.4" viewBox="0 0 13 12.4" preserveAspectRatio="none"><rect x="0.6" y="0.6" width="11.8" height="11.2" rx="1" fill="#e9e9e9" stroke="#d2d2d2" stroke-width="1"/><rect x="2.4" y="5.2" width="5.4" height="5" fill="#f6f6f6" stroke="#d2d2d2" stroke-width="1"/></svg>
<svg class="i" style="left:521.6px;top:69.4px;" width="11.4" height="9.2" viewBox="0 0 11.4 9.2" preserveAspectRatio="none"><path d="M0 4.6H3.4" stroke="#3a424c" stroke-width="1.1"/><path d="M3.4 2.4L5 3.2H8.2L10.4 0.8V8.4L8.2 6H5L3.4 6.8Z" fill="#f8f8f8" stroke="#3a424c" stroke-width="1.1" stroke-linejoin="round"/></svg>
<svg class="i" style="left:481.0px;top:88.0px;" width="13.4" height="11.8" viewBox="0 0 13.4 11.8" preserveAspectRatio="none"><path d="M0.4 3.4H6" stroke="#3a424c" stroke-width="1.1"/><path d="M8.8 3.4L5.4 1.4V5.4Z" fill="#3a424c"/><path d="M0.6 7.8H5" stroke="#6a727e" stroke-width="2.6"/><path d="M5 7.8H10.6" stroke="#62acec" stroke-width="3"/><path d="M11.6 0.4V11.8" stroke="#6a727e" stroke-width="1.7"/></svg>
<svg class="i" style="left:501.0px;top:88.0px;" width="13.6" height="11.8" viewBox="0 0 13.6 11.8" preserveAspectRatio="none"><path d="M2.4 2H7" stroke="#3a424c" stroke-width="1.1"/><path d="M9.8 2L6.4 0V4Z" fill="#3a424c"/><path d="M0.6 6H5M0.6 10H5" stroke="#6a727e" stroke-width="2.4"/><path d="M5 6H11M5 10H11" stroke="#62acec" stroke-width="2.8"/><path d="M11.8 0.4V11.8" stroke="#6a727e" stroke-width="1.7"/></svg>
<svg class="i" style="left:523.0px;top:89.0px;" width="11.0" height="11.0" viewBox="0 0 11 11" preserveAspectRatio="none"><path d="M1.4 1.4L9.6 9.6M9.6 1.4L1.4 9.6" stroke="#c4c4c4" stroke-width="2.8" stroke-linecap="round"/></svg>
<svg class="i" style="left:545.0px;top:51.8px;" width="23.6" height="14.8" viewBox="0 0 23.6 14.8" preserveAspectRatio="none"><path d="M1 3H22.6" stroke="#2c3138" stroke-width="1.4"/><path d="M0.4 3L5 0.6V5.4ZM23.2 3L18.6 0.6V5.4Z" fill="#2c3138"/><rect x="0.6" y="8.8" width="22.4" height="5.2" rx="1" fill="#f2c230" stroke="#c8961a" stroke-width=".9"/><path d="M3 9V11.2M5.6 9V10.4M8.2 9V11.2M10.8 9V10.4M13.4 9V11.2M16 9V10.4M18.6 9V11.2M21.2 9V10.4" stroke="#a87c10" stroke-width=".5"/></svg>
<svg style="left:575.6px;top:58.2px" width="4.0" height="2.0" viewBox="0 0 4 2.0"><path d="M0 0H4L2.0 2.0Z" fill="#3a3a3a"/></svg>
<svg class="i" style="left:545.0px;top:75.5px;" width="25.0" height="24.0" viewBox="0 0 25 24" preserveAspectRatio="none"><path d="M4 20L20 4.6" stroke="#2c3138" stroke-width="1.3"/><path d="M0.6 16L7 23.4M16.8 0.6L23.6 7.6" stroke="#2c3138" stroke-width="1.2"/><path d="M4 20L5 15.2L8.8 19ZM20 4.6L19 9.4L15.2 5.6Z" fill="#2c3138"/></svg>
<svg style="left:575.6px;top:87.0px" width="4.0" height="2.0" viewBox="0 0 4 2.0"><path d="M0 0H4L2.0 2.0Z" fill="#3a3a3a"/></svg>
<svg class="i" style="left:592.7px;top:47.0px;" width="24.5" height="24.2" viewBox="0 0 24.5 24.2" preserveAspectRatio="none"><path d="M4 0.8H0.8V23.4H4M20.5 4H23.7V23.4H20.5" fill="none" stroke="#d0d0d0" stroke-width="1.2"/><circle cx="10.6" cy="9" r="6.6" fill="#f2f2f2" stroke="#d0d0d0" stroke-width="1.1"/><rect x="10" y="10.4" width="10" height="9.6" rx="1.6" fill="#ebebeb" stroke="#d0d0d0" stroke-width="1.1"/><circle cx="20.4" cy="4" r="2.2" fill="none" stroke="#d0d0d0" stroke-width="1"/><path d="M20.4 0V1.2M20.4 6.8V8M16.4 4H17.6M23.2 4H24.4" stroke="#d0d0d0" stroke-width=".9"/></svg>
<svg class="i" style="left:592.0px;top:75.5px;" width="25.0" height="24.0" viewBox="0 0 25 24" preserveAspectRatio="none"><rect x="0.6" y="1" width="6" height="5" fill="#f6f6f6" stroke="#d0d0d0" stroke-width="1"/><rect x="18" y="0.6" width="6" height="5.6" rx="1" fill="#f2f2f2" stroke="#d0d0d0" stroke-width="1"/><rect x="0.6" y="17.6" width="8.6" height="5.6" rx="1" fill="#f0f0f0" stroke="#d0d0d0" stroke-width="1"/><path d="M20 13.4L23.6 17L20 20.6L16.4 17Z" fill="#f2f2f2" stroke="#d0d0d0" stroke-width="1"/><path d="M8.6 3.4H14.6M3.4 8.4V14M10 8L14.6 12.6" stroke="#bdbdbd" stroke-width="1"/><path d="M16.4 3.4L13.6 1.8V5ZM3.4 16L1.8 13.2H5ZM16 14L12.8 13.4L15.2 11Z" fill="#bdbdbd"/></svg>
<svg class="i" style="left:636.0px;top:50.5px;" width="18.2" height="17.3" viewBox="0 0 18.2 17.3" preserveAspectRatio="none"><path d="M2.4 2.4L15.8 15M15.8 2.4L2.4 15" stroke="#e8564a" stroke-width="3.6" stroke-linecap="round"/></svg>
<svg class="i" style="left:637.0px;top:81.0px;" width="17.6" height="14.6" viewBox="0 0 17.6 14.6" preserveAspectRatio="none"><path d="M1.4 8.6L6 12.6L16 1.8" fill="none" stroke="#c4c4c4" stroke-width="3.2" stroke-linejoin="round"/></svg>
<svg class="i" style="left:679.0px;top:49.0px;" width="22.4" height="23.0" viewBox="0 0 22.4 23" preserveAspectRatio="none"><path d="M1 12.6L4 10V19.6L1 21.4Z" fill="#f2f2f2" stroke="#7a8694" stroke-width=".9"/><path d="M3.6 6L21.4 1V16L3.6 21.8Z" fill="#5aa4e4" stroke="#2f78c0" stroke-width="1"/><path d="M9.4 4.4V20M15.4 2.8V18M3.6 11.2L21.4 6M3.6 16.4L21.4 11" stroke="#cfe6f8" stroke-width="1.1"/></svg>
<div class="t" style="left:673.0px;top:76.8px;font-size:10.5px;color:#3a3a3a;transform:scaleX(0.932);">Nastavit</div>
<svg style="left:688.7px;top:91.8px" width="4.0" height="2.0" viewBox="0 0 4 2.0"><path d="M0 0H4L2.0 2.0Z" fill="#3a3a3a"/></svg>
<svg class="i" style="left:726.7px;top:48.0px;" width="23.3" height="24.0" viewBox="0 0 23.3 24" preserveAspectRatio="none"><path d="M1 5.4L16.6 0.8V16.6L1 21Z" fill="#fafafa" stroke="#4a525c" stroke-width="1.2"/><path d="M6.2 3.8V19.6M11.4 2.4V18M1 10.6L16.6 6M1 15.8L16.6 11.2" stroke="#4a525c" stroke-width="1"/><circle cx="17.4" cy="14" r="4.6" fill="#f8d648" stroke="#d8a81e" stroke-width=".9"/><rect x="15.6" y="18.4" width="3.6" height="3.6" rx=".8" fill="#6a7480"/></svg>
<div class="t" style="left:719.8px;top:76.8px;font-size:10.5px;color:#3a3a3a;transform:scaleX(0.956);">Zobrazit</div>
<svg class="i" style="left:768.0px;top:48.0px;" width="25.0" height="24.0" viewBox="0 0 25 24" preserveAspectRatio="none"><rect x="0.8" y="0.8" width="22" height="22" rx="1" fill="#f8f8f8" stroke="#4a525c" stroke-width="1.3"/><rect x="0.8" y="0.8" width="22" height="3.4" fill="#4a525c"/><path d="M5.6 9.6L8.6 7.2H17.4V16.4L14.4 19H5.6Z" fill="#58a84c" stroke="#3a8432" stroke-width=".8"/><path d="M5.6 9.6H14.4V19M14.4 9.6L17.4 7.2" fill="none" stroke="#8ed082" stroke-width=".9"/><path d="M18.6 1V10.4L20.8 8.4L22.4 12L24 11.2L22.4 7.8H25.4Z" fill="#fff" stroke="#8a8a8a" stroke-width=".7"/></svg>
<div class="t" style="left:760.4px;top:76.8px;font-size:10.5px;color:#3a3a3a;transform:scaleX(0.894);">Prohlížeč</div>
<svg class="i" style="left:808.8px;top:52.0px;" width="24.6" height="14.6" viewBox="0 0 24.6 14.6" preserveAspectRatio="none"><path d="M1 12.6L2 9L13 0.8L16 4.6L5 12.8Z" fill="#f2c230" stroke="#6a5a2a" stroke-width=".9"/><path d="M1 12.6L2 9L5 12.8Z" fill="#3a3a3a"/><path d="M4 13.4H19Q23.6 12.4 23.4 7.4Q23 3.4 19.6 3" fill="none" stroke="#3a3a3a" stroke-width="1.1"/><circle cx="18.6" cy="3" r="1.5" fill="#fff" stroke="#3a3a3a" stroke-width=".9"/><circle cx="19.6" cy="13.2" r="1.5" fill="#fff" stroke="#3a3a3a" stroke-width=".9"/></svg>
<div class="t" style="left:836.4px;top:53.4px;font-size:10.5px;color:#3a3a3a;transform:scaleX(0.949);">Načrtnout trajektorii</div>
<svg class="i" style="left:808.0px;top:76.0px;" width="25.4" height="24.8" viewBox="0 0 25.4 24.8" preserveAspectRatio="none"><path d="M1 3.6Q1 0.8 6 0.8Q11 0.8 11 3.6V8Q11 11 14.4 11H19.6V19.6H12Q1 19.6 1 9Z" fill="#e6e6e6" stroke="#d0d0d0" stroke-width="1.1"/><ellipse cx="6" cy="3.4" rx="5" ry="2.4" fill="#f2f2f2" stroke="#d0d0d0" stroke-width="1"/><path d="M14 8.6L21.4 5.8V17L14 19.6Z" fill="#efefef" stroke="#d0d0d0" stroke-width="1"/><path d="M15.4 9.4V21L18 18.6L20 23.4L22.2 22.4L20.2 17.8H24Z" fill="#f8f8f8" stroke="#c4c4c4" stroke-width=".9" stroke-linejoin="round"/></svg>
<div class="t" style="left:836.4px;top:82.6px;font-size:10.5px;color:#b9b9b9;transform:scaleX(0.951);">Vybrat trajektorii</div>
<div class="a" style="left:929.6px;top:46.0px;width:1.0px;height:56.0px;background:#dcdcdc;"></div>
<svg class="i" style="left:938.0px;top:47.0px;" width="25.4" height="25.2" viewBox="0 0 25.4 25.2" preserveAspectRatio="none"><path d="M1 8.4Q1 6.4 3 5.4L11 1.2Q13 0.4 15 1.2L23 5.4Q24.6 6.4 24.6 8.4V12.6Q24.6 14.6 22.6 15.4L16 17.6V23L10.4 24.6Q8 24.6 8 22.6V15.6Q4.6 15.8 2.4 14Q1 12.8 1 11Z" fill="#f3f4f5" stroke="#5e6672" stroke-width="1.1" stroke-linejoin="round"/><path d="M1 8.6Q3.6 11.6 9 9.8L15.4 6.6Q17.4 5.4 15.6 4.2L11.6 2M9 9.8V15.4M16 9.6L24 6.6" fill="none" stroke="#5e6672" stroke-width=".9"/><rect x="13.4" y="13" width="7" height="7" fill="#bfe0f6" stroke="#4c94d8" stroke-width="1"/><path d="M13.4 13L16 10.8H23V17.8L20.4 20M20.4 13L23 10.8" fill="none" stroke="#4c94d8" stroke-width=".9"/></svg>
<div class="t" style="left:936.4px;top:76.7px;font-size:10.5px;color:#3a3a3a;transform:scaleX(0.940);">Vybrat</div>
<div class="t" style="left:939.0px;top:88.8px;font-size:10.5px;color:#3a3a3a;transform:scaleX(1.022);">profil</div>
<div class="t" style="left:966.9px;top:49.1px;font-size:10.5px;color:#3a3a3a;transform:scaleX(0.948);">Profil:</div>
<div class="a" style="left:967.5px;top:62.4px;width:160.1px;height:17.8px;background:#c2dbf3;box-sizing:border-box;border:1.2px solid #5297e0;"></div>
<div class="t" style="left:970.6px;top:65.6px;font-size:10.5px;color:#2e2e2e;transform:scaleX(0.939);">&lt;Dle náčrtu&gt;</div>
<svg style="left:1119.9px;top:70.7px" width="5.4" height="2.7" viewBox="0 0 5.4 2.7"><path d="M0 0H5.4L2.7 2.7Z" fill="#3a3a3a"/></svg>
<!-- sec_options -->
<div class="a" style="left:1.0px;top:119.0px;width:1535.0px;height:1.0px;background:#cde2de;"></div>
<div class="t" style="left:6.8px;top:124.9px;font-size:10.5px;color:#222;transform:scaleX(0.913);-webkit-text-stroke:.2px #222;">Upravit | Tažení</div>
<div class="a" style="left:91.2px;top:122.8px;width:1.0px;height:16.6px;background:#b4c4c2;"></div>
<div class="t" style="left:99.1px;top:122.0px;font-size:10.5px;color:#1e1e1e;transform:scaleX(0.902);-webkit-text-stroke:.25px #1e1e1e;">X:</div>
<div class="a" style="left:110.0px;top:122.4px;width:74.4px;height:17.6px;background:#d4ece8;box-sizing:border-box;border:1px solid #e8f6f4;"></div>
<div class="t" style="left:113.3px;top:124.0px;font-size:10.5px;color:#9a9a9a;transform:scaleX(1.122);">0</div>
<div class="t" style="left:191.3px;top:122.0px;font-size:10.5px;color:#1e1e1e;transform:scaleX(0.830);-webkit-text-stroke:.25px #1e1e1e;">Y:</div>
<div class="a" style="left:200.8px;top:122.4px;width:75.2px;height:17.6px;background:#d4ece8;box-sizing:border-box;border:1px solid #e8f6f4;"></div>
<div class="t" style="left:204.3px;top:124.0px;font-size:10.5px;color:#9a9a9a;transform:scaleX(1.122);">0</div>
<div class="t" style="left:283.9px;top:121.6px;font-size:10.5px;color:#1e1e1e;transform:scaleX(0.940);-webkit-text-stroke:.25px #1e1e1e;">Úhel:</div>
<div class="a" style="left:308.6px;top:122.4px;width:75.8px;height:17.6px;background:#d4ece8;box-sizing:border-box;border:1px solid #e8f6f4;"></div>
<div class="t" style="left:312.1px;top:124.0px;font-size:10.5px;color:#9a9a9a;transform:scaleX(0.863);">0.00°</div>
<div class="a" style="left:389.0px;top:121.6px;width:37.6px;height:18.6px;background:#f5f5f5;box-sizing:border-box;border:1px solid #b8b8b8;"></div>
<div class="t" style="left:391.6px;top:124.1px;font-size:10.5px;color:#b0b0b0;transform:scaleX(0.982);">Obrátit</div>
<div class="a" style="left:430.4px;top:121.6px;width:34.0px;height:18.6px;background:#f5f5f5;box-sizing:border-box;border:1px solid #b0b0b0;"></div>
<div class="t" style="left:433.6px;top:124.1px;font-size:10.5px;color:#1e1e1e;transform:scaleX(0.919);-webkit-text-stroke:.25px #1e1e1e;">Použít</div>
<!-- sec_props -->
<div class="a" style="left:1.0px;top:142.6px;width:175.8px;height:671.4px;background:#eeeeee;"></div>
<div class="a" style="left:176.2px;top:143.0px;width:1.8px;height:671.0px;background:#d2d2d2;"></div>
<div class="t" style="left:2.6px;top:144.0px;font-size:10.5px;color:#4a4a4a;transform:scaleX(0.926);">Vlastnosti</div>
<svg class="i" style="left:164.0px;top:146.3px;" width="8.2" height="7.9" viewBox="0 0 8.2 7.9" preserveAspectRatio="none"><path d="M0.6 0.6L7.6 7.3M7.6 0.6L0.6 7.3" stroke="#2a2a2a" stroke-width="1.5"/></svg>
<div class="a" style="left:2.0px;top:158.8px;width:172.6px;height:54.8px;background:linear-gradient(#f7f7f7,#ececec)"></div>
<div class="a" style="left:5.0px;top:160.6px;width:51.0px;height:51.4px;box-sizing:border-box;border:1px solid #f0f0f0;background:linear-gradient(160deg,#f4f4f4,#e9e9e9)"></div>
<svg class="i" style="left:16.0px;top:164.0px;" width="32.0" height="37.0" viewBox="0 0 32 37" preserveAspectRatio="none"><defs><linearGradient id="rg" x1="0" y1="0" x2="1" y2="1"><stop offset="0" stop-color="#8e8e8e"/><stop offset="1" stop-color="#b4b4b4"/></linearGradient></defs><path d="M3 36.4L31 28L31 33L12 36.6Z" fill="#e0e0e0"/><path d="M10 36L30 34L21 24Z" fill="#d4d4d4"/><text x="1" y="36" font-family="Liberation Sans,sans-serif" font-weight="bold" font-size="49" fill="#a6a6a6" textLength="28" lengthAdjust="spacingAndGlyphs">R</text><text x="2.6" y="36" font-family="Liberation Sans,sans-serif" font-weight="bold" font-size="49" fill="url(#rg)" textLength="27.4" lengthAdjust="spacingAndGlyphs">R</text></svg>
<svg style="left:167.5px;top:185.3px" width="5.0" height="2.5" viewBox="0 0 5 2.5"><path d="M0 0H5L2.5 2.5Z" fill="#8a8a8a"/></svg>
<div class="a" style="left:2.0px;top:215.0px;width:103.0px;height:17.4px;background:#e1e1e1;box-sizing:border-box;border:1px solid #b4b4b4;"></div>
<div class="t" style="left:4.0px;top:218.1px;font-size:10.5px;color:#222;transform:scaleX(0.921);">Obecné modely (1)</div>
<svg class="i" style="left:94.6px;top:222.0px;" width="6.8" height="4.0" viewBox="0 0 6.8 4" preserveAspectRatio="none"><path d="M0.4 0.4L3.4 3.4L6.4 0.4" fill="none" stroke="#555" stroke-width="1"/></svg>
<svg class="i" style="left:109.0px;top:216.6px;" width="10.6" height="11.0" viewBox="0 0 10.6 11" preserveAspectRatio="none"><path d="M0.5 0.5H4.4V4.2H0.5ZM5.8 0.5H9.6V4.2H5.8ZM0.5 5.6H4.4V9.4H0.5Z" fill="#f6f6f6" stroke="#c2c2c2" stroke-width=".9"/><path d="M5 4.6H10.1V10.5H5Z" fill="#f8f8f8" stroke="#bcbcbc" stroke-width=".9"/><path d="M6.2 6.4H9M6.2 8H9" stroke="#c8c8c8" stroke-width=".7"/></svg>
<div class="t" style="left:122.3px;top:216.6px;font-size:10.5px;color:#bababa;transform:scaleX(0.940);">Upravit typ</div>
<div class="a" style="left:2.0px;top:234.0px;width:172.6px;height:14.4px;background:#dddddd;"></div>
<div class="t" style="left:2.4px;top:235.0px;font-size:10.5px;color:#2a2a2a;transform:scaleX(0.968);">Profil</div>
<svg class="i" style="left:166.4px;top:235.8px;" width="4.4" height="5.8" viewBox="0 0 5 7.4" preserveAspectRatio="none"><path d="M0.5 3.2L2.5 0.8L4.5 3.2M0.5 6.6L2.5 4.2L4.5 6.6" fill="none" stroke="#2a2a2a" stroke-width="1.1"/></svg>
<div class="a" style="left:2.0px;top:248.4px;width:172.6px;height:76.4px;background:#ffffff;"></div>
<div class="a" style="left:2.0px;top:263.3px;width:172.6px;height:1.0px;border-top:1px solid #dadada;height:0"></div>
<div class="a" style="left:2.0px;top:278.5px;width:172.6px;height:1.0px;border-top:1px solid #dadada;height:0"></div>
<div class="a" style="left:2.0px;top:293.9px;width:172.6px;height:1.0px;border-top:1px solid #dadada;height:0"></div>
<div class="a" style="left:2.0px;top:309.1px;width:172.6px;height:1.0px;border-top:1px solid #dadada;height:0"></div>
<div class="a" style="left:2.0px;top:324.3px;width:172.6px;height:1.0px;border-top:1px solid #dadada;height:0"></div>
<div class="a" style="left:82.5px;top:248.4px;width:1.0px;height:76.4px;border-left:1px solid #dadada;width:0"></div>
<div class="a" style="left:163.7px;top:248.4px;width:1.0px;height:76.4px;border-left:1px solid #dadada;width:0"></div>
<div class="a" style="left:173.5px;top:248.4px;width:1.0px;height:76.4px;border-left:1px solid #dadada;width:0"></div>
<div class="t" style="left:7.9px;top:249.8px;font-size:10.5px;color:#2a2a2a;transform:scaleX(0.959);">Profil</div>
<div class="t" style="left:7.9px;top:264.9px;font-size:10.5px;color:#969696;transform:scaleX(0.920);">Horizontální od...</div>
<div class="t" style="left:7.9px;top:280.0px;font-size:10.5px;color:#969696;transform:scaleX(0.893);">Vertikální odsaz...</div>
<div class="t" style="left:7.9px;top:295.4px;font-size:10.5px;color:#969696;transform:scaleX(0.905);">Úhel</div>
<div class="t" style="left:7.9px;top:310.4px;font-size:10.5px;color:#969696;transform:scaleX(0.907);">Profil je překlop...</div>
<div class="a" style="left:83.0px;top:248.2px;width:81.8px;height:16.0px;background:#fff;box-sizing:border-box;border:1.3px solid #636363;border-radius:1.5px;"></div>
<div class="t" style="left:85.1px;top:249.8px;font-size:10.5px;color:#1e1e1e;transform:scaleX(0.926);">&lt;Dle náčrtu&gt;</div>
<div class="t" style="left:84.3px;top:264.9px;font-size:10.5px;color:#969696;transform:scaleX(0.901);">0.0</div>
<div class="t" style="left:84.3px;top:280.0px;font-size:10.5px;color:#969696;transform:scaleX(0.901);">0.0</div>
<div class="t" style="left:84.3px;top:295.4px;font-size:10.5px;color:#969696;transform:scaleX(0.891);">0.00°</div>
<div class="a" style="left:86.5px;top:312.6px;width:9.1px;height:9.4px;background:#fff;box-sizing:border-box;border:1px solid #d4d4d4;"></div>
<div class="a" style="left:2.0px;top:325.3px;width:172.6px;height:467.7px;background:#ffffff;"></div>
<div class="t" style="left:2.8px;top:795.0px;font-size:10.5px;color:#2f78dc;transform:scaleX(0.921);text-decoration:underline;">Nápověda k vlastnostem</div>
<div class="a" style="left:118.0px;top:794.4px;width:55.0px;height:16.6px;background:#cccccc;"></div>
<div class="t" style="left:131.8px;top:796.8px;font-size:10.5px;color:#9a9a9a;transform:scaleX(0.926);">Použít</div>
<!-- sec_view -->
<div class="a" style="left:178.0px;top:142.0px;width:1148.0px;height:16.5px;background:#cccccc;"></div>
<div class="a" style="left:179.0px;top:154.6px;width:101.0px;height:3.9px;background:linear-gradient(#ecfdfb,#f6fffe)"></div>
<svg class="i" style="left:182.0px;top:143.6px;" width="12.4" height="11.8" viewBox="0 0 12.4 11.8" preserveAspectRatio="none"><rect x="0.6" y="0.6" width="7" height="9.4" rx="1" fill="#e2e2e2" stroke="#a8a8a8" stroke-width="1"/><rect x="4.4" y="2.6" width="7.4" height="8.6" rx="1" fill="#ececec" stroke="#a8a8a8" stroke-width="1"/><path d="M6.6 2.6V5H9.4V2.6" fill="none" stroke="#a8a8a8" stroke-width=".8"/></svg>
<div class="t" style="left:199.7px;top:144.3px;font-size:10.5px;color:#4a4a4a;transform:scaleX(0.897);">Ref. podlaží</div>
<div class="a" style="left:280.0px;top:143.0px;width:102.8px;height:15.5px;background:#ffffff;"></div>
<div class="a" style="left:280.0px;top:154.8px;width:102.8px;height:3.7px;background:#ffb3bf;"></div>
<svg class="i" style="left:283.7px;top:143.8px;" width="12.5" height="11.6" viewBox="0 0 12.4 11.8" preserveAspectRatio="none"><rect x="0.6" y="0.6" width="7" height="9.4" rx="1" fill="#e2e2e2" stroke="#7a7a7a" stroke-width="1"/><rect x="4.4" y="2.6" width="7.4" height="8.6" rx="1" fill="#ececec" stroke="#7a7a7a" stroke-width="1"/><path d="M6.6 2.6V5H9.4V2.6" fill="none" stroke="#7a7a7a" stroke-width=".8"/></svg>
<div class="t" style="left:302.1px;top:144.3px;font-size:10.5px;color:#1e1e1e;transform:scaleX(0.898);font-weight:bold;">Podlaží 1</div>
<svg class="i" style="left:370.0px;top:146.4px;" width="8.2" height="8.0" viewBox="0 0 8.2 8" preserveAspectRatio="none"><path d="M0.6 0.6L7.6 7.4M7.6 0.6L0.6 7.4" stroke="#2a2a2a" stroke-width="1.5"/></svg>
<div class="a" style="left:1315.8px;top:148.2px;width:6.0px;height:1.2px;background:#3a3a3a;"></div>
<svg style="left:1315.8px;top:150.5px" width="6.0" height="3.0" viewBox="0 0 6 3.0"><path d="M0 0H6L3.0 3.0Z" fill="#3a3a3a"/></svg>
<div class="a" style="left:1311.4px;top:158.5px;width:14.6px;height:640.1px;background:#f0f0f0;"></div>
<svg class="i" style="left:1314.4px;top:165.0px;" width="6.8" height="3.8" viewBox="0 0 6.8 4" preserveAspectRatio="none"><path d="M0.4 3.6L3.4 0.6L6.4 3.6" fill="none" stroke="#505050" stroke-width="1.2"/></svg>
<svg class="i" style="left:1314.6px;top:790.2px;" width="6.8" height="4.0" viewBox="0 0 6.8 4" preserveAspectRatio="none"><path d="M0.4 0.4L3.4 3.4L6.4 0.4" fill="none" stroke="#505050" stroke-width="1.2"/></svg>
<div class="a" style="left:1311.6px;top:472.0px;width:13.0px;height:14.4px;background:#cdcdcd;"></div>
<div class="a" style="left:1311.4px;top:172.6px;width:12.6px;height:0.8px;background:#e2e2e2;"></div>
<div class="a" style="left:1326.0px;top:143.0px;width:2.0px;height:671.0px;background:#cfcfcf;"></div>
<div class="a" style="left:1288.0px;top:160.0px;width:22.8px;height:75.0px;background:#f3f3f3;box-sizing:border-box;border:1px solid #c2c2c2;border-radius:3px;"></div>
<svg class="i" style="left:1302.6px;top:161.6px;" width="5.0" height="5.0" viewBox="0 0 5 5" preserveAspectRatio="none"><circle cx="2.5" cy="2.5" r="2" fill="#ebebeb" stroke="#cfcfcf" stroke-width=".8"/></svg>
<svg class="i" style="left:1302.6px;top:227.8px;" width="5.0" height="5.0" viewBox="0 0 5 5" preserveAspectRatio="none"><circle cx="2.5" cy="2.5" r="2" fill="#ebebeb" stroke="#cfcfcf" stroke-width=".8"/></svg>
<svg class="i" style="left:1291.4px;top:172.4px;" width="16.0" height="16.0" viewBox="0 0 16 16" preserveAspectRatio="none"><rect x="1" y="1" width="12" height="11.4" rx="4.6" fill="#f8f8f8" stroke="#c4c4c4" stroke-width="1.2"/><rect x="4" y="3.8" width="6" height="5.8" rx="2" fill="#fdfdfd" stroke="#cfcfcf" stroke-width="1"/><text x="8.4" y="15.6" font-family="Liberation Sans,sans-serif" font-weight="bold" font-size="5.6" fill="#8cb8e4">2D</text></svg>
<svg style="left:1297.3px;top:192.6px" width="3.4" height="1.7" viewBox="0 0 3.4 1.7"><path d="M0 0H3.4L1.7 1.7Z" fill="#a8a8a8"/></svg>
<div class="a" style="left:1291.4px;top:196.6px;width:16.0px;height:0.8px;background:#dcdcdc;"></div>
<svg class="i" style="left:1293.4px;top:202.6px;" width="12.0" height="11.0" viewBox="0 0 12 11" preserveAspectRatio="none"><rect x="0.4" y="0.4" width="7.4" height="7" fill="#b4dcb0"/><circle cx="7.4" cy="6.8" r="2.4" fill="#f4f8f4" stroke="#b8b8b8" stroke-width=".9"/><path d="M9.2 8.6L11.4 10.6" stroke="#b0b0b0" stroke-width="1.1"/></svg>
<svg style="left:1297.3px;top:219.6px" width="3.4" height="1.7" viewBox="0 0 3.4 1.7"><path d="M0 0H3.4L1.7 1.7Z" fill="#a8a8a8"/></svg>
<div class="a" style="left:179.0px;top:798.6px;width:1147.0px;height:15.4px;background:#f0f0f0;"></div>
<div class="a" style="left:179.0px;top:812.8px;width:1147.0px;height:1.2px;background:#f9f9f9;"></div>
<div class="t" style="left:196.3px;top:799.7px;font-size:9.2px;color:#2a2a2a;transform:scaleX(0.923);font-weight:bold;">1 : 100</div>
<svg class="i" style="left:237.5px;top:799.6px;" width="13.0" height="10.0" viewBox="0 0 13 10" preserveAspectRatio="none"><rect x="0.6" y="0.6" width="11.8" height="8.8" rx=".8" fill="#fafafa" stroke="#4a525c" stroke-width="1.1"/></svg>
<svg class="i" style="left:253.4px;top:799.4px;" width="13.0" height="11.0" viewBox="0 0 13 11" preserveAspectRatio="none"><path d="M0.6 3.6L3.4 0.8H12.2V7.4L9.4 10.2H0.6Z" fill="#fafafa" stroke="#4a525c" stroke-width="1" stroke-linejoin="round"/><path d="M0.6 3.6H9.4V10.2M9.4 3.6L12.2 0.8" fill="none" stroke="#4a525c" stroke-width=".9"/></svg>
<svg class="i" style="left:268.4px;top:799.0px;" width="14.0" height="12.0" viewBox="0 0 14 12" preserveAspectRatio="none"><path d="M0 7H2.4M8 0.4V2.6" stroke="#7a828e" stroke-width="1.2"/><rect x="2.4" y="2.6" width="8" height="8.4" fill="#3f86d8"/><rect x="2.4" y="2.6" width="8" height="1.6" fill="#2f6cb8"/><path d="M6.6 5.4L12.4 11.2M12.4 5.4L6.6 11.2" stroke="#e0342a" stroke-width="1.9"/></svg>
<svg class="i" style="left:284.6px;top:799.0px;" width="14.0" height="12.0" viewBox="0 0 14 12" preserveAspectRatio="none"><path d="M0 7H2.4M8 0.4V2.6" stroke="#7a828e" stroke-width="1.2"/><rect x="2.4" y="2.6" width="8" height="8.4" fill="#3f86d8"/><rect x="2.4" y="2.6" width="8" height="1.6" fill="#2f6cb8"/><path d="M6 7.4H8" stroke="#e0584c" stroke-width="1.2"/><circle cx="10.8" cy="5" r="2.8" fill="#e6f1fc" stroke="#8cbcf0" stroke-width="1.1"/><path d="M10 8H11.6V10.6H10Z" fill="#8a929e"/></svg>
<svg class="i" style="left:300.8px;top:800.0px;" width="13.6" height="10.4" viewBox="0 0 13.6 10.4" preserveAspectRatio="none"><path d="M0.6 2.4Q2 1 3.4 2.6L5.6 6.4M10 0.8Q12.6 0.2 12.8 3.4L12.6 5" fill="none" stroke="#7a828e" stroke-width="1"/><ellipse cx="6.4" cy="7.6" rx="2.2" ry="2" fill="#d6eaf8" stroke="#6a727e" stroke-width="1"/><ellipse cx="11" cy="6" rx="2.2" ry="2" fill="#d6eaf8" stroke="#6a727e" stroke-width="1"/><path d="M8.4 7L9 6.6" stroke="#6a727e" stroke-width="1"/></svg>
<svg class="i" style="left:316.4px;top:799.4px;" width="13.4" height="11.2" viewBox="0 0 13.4 11.2" preserveAspectRatio="none"><path d="M2 1.4V10.6H8" fill="none" stroke="#4a525c" stroke-width="1"/><path d="M2 1.4H12.6" stroke="#4a525c" stroke-width="1"/><rect x="0.4" y="0.2" width="3" height="2.6" fill="#6a7480"/><rect x="10.6" y="0.2" width="2.8" height="2.6" fill="#6a7480"/><path d="M7 6.4L9.8 4.6H12.8V10.4H7Z" fill="#5a6470"/></svg>
<svg class="i" style="left:331.8px;top:799.8px;" width="13.4" height="10.4" viewBox="0 0 13.4 10.4" preserveAspectRatio="none"><rect x="0.5" y="0.5" width="12.4" height="9.4" rx=".8" fill="#e8ecf0" stroke="#6a7480" stroke-width=".9"/><rect x="1.6" y="1.8" width="7.4" height="3.4" fill="#6a7480"/><rect x="1.6" y="6.4" width="7.4" height="2.4" fill="#aab2bc"/><rect x="10" y="1.8" width="2" height="2.4" fill="#4c94d8"/><rect x="10" y="5.6" width="2" height="3.2" fill="#4c94d8"/></svg>
<svg class="i" style="left:351.6px;top:802.0px;" width="4.4" height="7.4" viewBox="0 0 4.4 7.6" preserveAspectRatio="none"><path d="M3.8 0.6L0.8 3.8L3.8 7" fill="none" stroke="#2a2a2a" stroke-width="1.3"/></svg>
<div class="a" style="left:823.0px;top:800.2px;width:13.2px;height:12.2px;background:#cdcdcd;"></div>
<svg class="i" style="left:1302.0px;top:802.3px;" width="4.4" height="7.6" viewBox="0 0 4.4 7.6" preserveAspectRatio="none"><path d="M0.6 0.6L3.6 3.8L0.6 7" fill="none" stroke="#2a2a2a" stroke-width="1.3"/></svg>
<svg class="i" style="left:1316.0px;top:804.6px;" width="6.4" height="6.4" viewBox="0 0 6 6" preserveAspectRatio="none"><path d="M4.4 0.4H5.6V1.6H4.4ZM2.4 2.4H3.6V3.6H2.4ZM4.4 2.4H5.6V3.6H4.4ZM0.4 4.4H1.6V5.6H0.4ZM2.4 4.4H3.6V5.6H2.4ZM4.4 4.4H5.6V5.6H4.4Z" fill="#b0b0b0"/></svg>
<svg style="left:178px;top:157px" width="1133" height="640" viewBox="178 157 1133 640"><path d="M399.9 311V326M399.9 336.6V348.4M399.9 359.2V371M399.9 381.6V393.6M399.9 405V416.6M399.9 427.4V442" stroke="#7c9aec" stroke-width="1.4" fill="none"/><polyline points="312,376.9 488.3,376.9 583,394.7 693,448.8 779.8,535.8 889.9,589.1 1010.9,604.3 1188,604.3" fill="none" stroke="#7a7a7a" stroke-width="1.1" stroke-linejoin="round"/><circle cx="399.9" cy="376.9" r="2.6" fill="#e6249c"/></svg>
<!-- sec_browser -->
<div class="a" style="left:1328.0px;top:143.0px;width:208.0px;height:15.2px;background:#eeeeee;"></div>
<div class="a" style="left:1328.0px;top:158.2px;width:208.0px;height:655.8px;background:#ffffff;"></div>
<div class="a" style="left:1534.6px;top:143.0px;width:1.4px;height:671.0px;background:#e6e6e6;"></div>
<div class="t" style="left:1329.8px;top:144.4px;font-size:10.5px;color:#4a4a4a;transform:scaleX(0.915);">Prohlížeč projektu - Projekt1</div>
<svg class="i" style="left:1525.0px;top:146.4px;" width="8.4" height="8.2" viewBox="0 0 8.4 8.2" preserveAspectRatio="none"><path d="M0.6 0.6L7.8 7.6M7.8 0.6L0.6 7.6" stroke="#2a2a2a" stroke-width="1.5"/></svg>
<div class="a" style="left:1360.5px;top:158.4px;width:80.5px;height:13.0px;background:#e4e4e4;"></div>
<div class="t" style="left:1361.8px;top:159.4px;font-size:10.5px;color:#222;transform:scaleX(0.894);">Pohledy (všechny)</div>
<div class="t" style="left:1361.8px;top:173.4px;font-size:10.5px;color:#222;transform:scaleX(0.927);">Legendy</div>
<div class="t" style="left:1361.8px;top:187.4px;font-size:10.5px;color:#222;transform:scaleX(0.905);">Výkazy/Množství (všechny)</div>
<div class="t" style="left:1361.8px;top:201.5px;font-size:10.5px;color:#222;transform:scaleX(0.873);">Výkresy (všechny)</div>
<div class="t" style="left:1361.8px;top:215.5px;font-size:10.5px;color:#222;transform:scaleX(0.947);">Rodiny</div>
<div class="t" style="left:1361.8px;top:229.5px;font-size:10.5px;color:#222;transform:scaleX(0.933);">Skupiny</div>
<div class="t" style="left:1361.8px;top:243.5px;font-size:10.5px;color:#222;transform:scaleX(0.918);">Připojené soubory aplikace Revit</div>
<div class="a" style="left:1335.0px;top:172.0px;width:1.0px;height:77.6px;border-left:1px dotted #d2d2d2;width:0"></div>
<div class="a" style="left:1340.0px;top:164.5px;width:5.4px;height:1.0px;border-top:1px dotted #d2d2d2;height:0"></div>
<div class="a" style="left:1336.0px;top:178.5px;width:9.4px;height:1.0px;border-top:1px dotted #d2d2d2;height:0"></div>
<div class="a" style="left:1336.0px;top:192.6px;width:9.4px;height:1.0px;border-top:1px dotted #d2d2d2;height:0"></div>
<div class="a" style="left:1336.0px;top:206.6px;width:9.4px;height:1.0px;border-top:1px dotted #d2d2d2;height:0"></div>
<div class="a" style="left:1340.0px;top:220.6px;width:5.4px;height:1.0px;border-top:1px dotted #d2d2d2;height:0"></div>
<div class="a" style="left:1340.0px;top:234.6px;width:5.4px;height:1.0px;border-top:1px dotted #d2d2d2;height:0"></div>
<div class="a" style="left:1336.0px;top:248.7px;width:9.4px;height:1.0px;border-top:1px dotted #d2d2d2;height:0"></div>
<svg class="i" style="left:1331.6px;top:161.0px;" width="8.0" height="8.0" viewBox="0 0 8 8" preserveAspectRatio="none"><rect x="0.5" y="0.5" width="7" height="7" rx=".6" fill="#f1f3f9" stroke="#b4bcd0" stroke-width=".9"/><path d="M1.2 4H6.8M4 1.2V6.8" stroke="#4f6cb8" stroke-width=".85"/></svg>
<svg class="i" style="left:1331.6px;top:217.1px;" width="8.0" height="8.0" viewBox="0 0 8 8" preserveAspectRatio="none"><rect x="0.5" y="0.5" width="7" height="7" rx=".6" fill="#f1f3f9" stroke="#b4bcd0" stroke-width=".9"/><path d="M1.2 4H6.8M4 1.2V6.8" stroke="#4f6cb8" stroke-width=".85"/></svg>
<svg class="i" style="left:1331.6px;top:231.1px;" width="8.0" height="8.0" viewBox="0 0 8 8" preserveAspectRatio="none"><rect x="0.5" y="0.5" width="7" height="7" rx=".6" fill="#f1f3f9" stroke="#b4bcd0" stroke-width=".9"/><path d="M1.2 4H6.8M4 1.2V6.8" stroke="#4f6cb8" stroke-width=".85"/></svg>
<svg class="i" style="left:1345.8px;top:158.8px;" width="12.6" height="12.4" viewBox="0 0 12.6 12.4" preserveAspectRatio="none"><path d="M0.6 3V0.6H3M9.6 0.6H12V3M12 9.4V11.8H9.6M3 11.8H0.6V9.4" fill="none" stroke="#4a525c" stroke-width="1.2"/><rect x="3.4" y="3.2" width="5.8" height="5.8" rx="1.6" fill="#f4f4f4" stroke="#4a525c" stroke-width="1"/></svg>
<svg class="i" style="left:1345.8px;top:172.8px;" width="12.6" height="12.4" viewBox="0 0 12.6 12.4" preserveAspectRatio="none"><rect x="0.6" y="0.8" width="11.4" height="10.8" fill="#f2f3f5" stroke="#4a525c" stroke-width="1"/><rect x="0.6" y="0.8" width="11.4" height="2" fill="#4a525c"/><rect x="2" y="4.2" width="3" height="2.4" fill="#6a7480"/><rect x="2" y="7.8" width="3" height="2.4" fill="#6a7480"/><path d="M6.2 5.4H10.8M6.2 9H10.8" stroke="#9aa2ac" stroke-width="1.6"/></svg>
<svg class="i" style="left:1345.8px;top:186.9px;" width="12.6" height="12.4" viewBox="0 0 12.6 12.4" preserveAspectRatio="none"><rect x="0.6" y="1.4" width="11.4" height="9.6" fill="#fafafa" stroke="#4a525c" stroke-width="1"/><rect x="0.6" y="1.4" width="11.4" height="2.2" fill="#4a525c"/><path d="M0.6 6H12M0.6 8.4H12M4.4 3.6V11M8.2 3.6V11" stroke="#9aa2ac" stroke-width=".7"/></svg>
<svg class="i" style="left:1345.8px;top:200.9px;" width="12.6" height="12.4" viewBox="0 0 12.6 12.4" preserveAspectRatio="none"><path d="M0.6 0.8H8.6L12 4.2V11.6H0.6Z" fill="#f2f3f5" stroke="#4a525c" stroke-width="1"/><path d="M8.6 0.8V4.2H12" fill="none" stroke="#4a525c" stroke-width=".9"/><path d="M2.2 9.8V5.4H6.4V9.8M6.4 7H9.6V9.8" fill="none" stroke="#7a8694" stroke-width=".9"/></svg>
<svg class="i" style="left:1345.8px;top:214.9px;" width="12.6" height="12.4" viewBox="0 0 12.6 12.4" preserveAspectRatio="none"><rect x="0.7" y="0.7" width="6" height="5.4" fill="#e8ecf0" stroke="#4a525c" stroke-width="1.2"/><rect x="8" y="0.7" width="3.8" height="10.4" fill="#dfe3e8" stroke="#4a525c" stroke-width="1.2"/><rect x="0.7" y="7.4" width="8" height="3.8" fill="#f0f2f4" stroke="#4a525c" stroke-width="1.2"/></svg>
<svg class="i" style="left:1345.8px;top:228.9px;" width="12.6" height="12.4" viewBox="0 0 12.6 12.4" preserveAspectRatio="none"><path d="M2.6 0.6H0.6V11.8H2.6M10 0.6H12V11.8H10" fill="none" stroke="#4a525c" stroke-width="1.1"/><circle cx="5.4" cy="5.2" r="3.2" fill="#e4e6ea" stroke="#6a7480" stroke-width="1"/><rect x="5" y="5.2" width="5" height="4.6" rx="1" fill="#cfd3d9" stroke="#6a7480" stroke-width="1"/></svg>
<svg class="i" style="left:1345.8px;top:243.0px;" width="12.6" height="12.4" viewBox="0 0 12.6 12.4" preserveAspectRatio="none"><rect x="0.7" y="3.4" width="7" height="5.6" rx="2.8" fill="#f0c048" stroke="#cf9418" stroke-width="1.3"/><rect x="5" y="3.4" width="7" height="5.6" rx="2.8" fill="#f0c048" stroke="#cf9418" stroke-width="1.3"/><path d="M3.4 6.2H9.4" stroke="#b07a10" stroke-width="1.2"/><path d="M2.6 5H4.6M8 5H10" stroke="#fbe6a8" stroke-width=".7"/></svg>
<!-- sec_status -->
<div class="a" style="left:1.0px;top:814.0px;width:1535.0px;height:21.0px;background:#cccccc;"></div>
<div class="a" style="left:1.0px;top:834.0px;width:1535.0px;height:1.0px;background:#929c9c;"></div>
<div class="t" style="left:2.4px;top:819.7px;font-size:10.5px;color:#222;transform:scaleX(0.894);">Klikněte pro výběr, stiskněte klávesu TAB pro alternativy, CTRL pro přidání, SHIFT pro odebrání prvků.</div>
<svg class="i" style="left:1352.0px;top:819.0px;" width="14.0" height="13.0" viewBox="0 0 14 13" preserveAspectRatio="none"><rect x="0.6" y="1.4" width="5.4" height="3.6" rx="1.8" fill="none" stroke="#d89a1c" stroke-width="1.5"/><rect x="4.6" y="1.4" width="5.4" height="3.6" rx="1.8" fill="none" stroke="#e8aa24" stroke-width="1.5"/><path d="M5 4.6v7.4l2-1.8 1.4 3 1.2-.6-1.4-2.8h2.6z" fill="#fff" stroke="#3a3a3a" stroke-width=".7"/></svg>
<svg class="i" style="left:1370.0px;top:818.6px;" width="15.0" height="13.4" viewBox="0 0 15 13.4" preserveAspectRatio="none"><path d="M1 10.4L6.4 2.4V10.4ZM1 10.4H10" fill="#eaf2fb" stroke="#3f78c8" stroke-width="1"/><path d="M2.6 7.4H8M4 5H8" stroke="#3f78c8" stroke-width=".8"/><path d="M8.6 0.6L12.8 4.8M12.8 0.6L8.6 4.8" stroke="#d8342a" stroke-width="1.6"/><path d="M8.6 5.4v7.4l2-1.8 1.4 3 1.2-.6-1.4-2.8h2.6z" fill="#fff" stroke="#3a3a3a" stroke-width=".7"/></svg>
<svg class="i" style="left:1389.4px;top:818.6px;" width="14.6" height="13.4" viewBox="0 0 14.6 13.4" preserveAspectRatio="none"><path d="M1 0.8H8V2.2H7.2V5L8.6 7H0.4L1.8 5V2.2H1Z" fill="#f28c40" stroke="#c8601e" stroke-width=".7"/><path d="M4.5 7V11" stroke="#c8601e" stroke-width=".9"/><path d="M8 5.2v7.4l2-1.8 1.4 3 1.2-.6-1.4-2.8h2.6z" fill="#fff" stroke="#3a3a3a" stroke-width=".7"/></svg>
<svg class="i" style="left:1409.0px;top:818.6px;" width="15.0" height="13.4" viewBox="0 0 15 13.4" preserveAspectRatio="none"><path d="M0.8 4L6 2.4V10.6L0.8 12.4Z" fill="#dcecfb" stroke="#3f78c8" stroke-width="1"/><path d="M6 2.4L8.4 3.4V10" fill="none" stroke="#3f78c8" stroke-width=".9"/><path d="M8.6 0.6L12.8 4.8M12.8 0.6L8.6 4.8" stroke="#d8342a" stroke-width="1.6"/><path d="M8.6 5.4v7.4l2-1.8 1.4 3 1.2-.6-1.4-2.8h2.6z" fill="#fff" stroke="#3a3a3a" stroke-width=".7"/></svg>
<svg class="i" style="left:1427.6px;top:818.6px;" width="14.4" height="13.4" viewBox="0 0 14.4 13.4" preserveAspectRatio="none"><path d="M4 0.4V8M0.2 4.2H7.8" stroke="#2c3138" stroke-width="1"/><path d="M4 0L5.2 1.8H2.8ZM0 4.2L1.6 3V5.4ZM8 4.2L6.4 3V5.4Z" fill="#2c3138"/><path d="M7.6 4.8v7.4l2-1.8 1.4 3 1.2-.6-1.4-2.8h2.6z" fill="#fff" stroke="#3a3a3a" stroke-width=".7"/></svg>
<svg class="i" style="left:1449.0px;top:819.8px;" width="11.0" height="11.0" viewBox="0 0 10 10" preserveAspectRatio="none"><circle cx="5" cy="5" r="3.4" fill="none" stroke="#b8b8b8" stroke-width="2"/><circle cx="5" cy="5" r="4.6" fill="none" stroke="#c0c0c0" stroke-width=".8" stroke-dasharray="1.6 1.4"/></svg>
<svg class="i" style="left:1465.4px;top:819.6px;" width="13.0" height="12.0" viewBox="0 0 13 12" preserveAspectRatio="none"><path d="M0.8 0.8H12.2L8 6V11.2L5 9.6V6Z" fill="#dcdcdc" stroke="#4a525c" stroke-width="1.1" stroke-linejoin="round"/><path d="M2.4 2.2H10.6" stroke="#f6f6f6" stroke-width="1"/></svg>
<div class="t" style="left:1479.9px;top:819.8px;font-size:10.5px;color:#3a3a3a;transform:scaleX(0.702);">:1</div>
<!-- sec_dropdown -->
<div class="a" style="left:968.0px;top:80.0px;width:160.0px;height:56.4px;background:#ffffff;box-sizing:border-box;border:1px solid #6a6a6a;border-color:#8c8c8c #5c5c5c #5c5c5c #8c8c8c;box-shadow:1px 1px 0 #5e5e5e,2px 3px 2px rgba(0,0,0,.3);"></div>
<div class="a" style="left:969.6px;top:81.8px;width:156.4px;height:16.2px;background:#c5dcf3;box-sizing:border-box;border:1.2px solid #66a3e4;"></div>
<div class="t" style="left:973.2px;top:84.0px;font-size:10.5px;color:#2a2a2a;transform:scaleX(0.926);">&lt;Dle náčrtu&gt;</div>
<div class="t" style="left:972.1px;top:101.7px;font-size:10.5px;color:#3a3a3a;transform:scaleX(0.916);">výkop:Hloubka výkopu 500 mm</div>
<div class="t" style="left:972.1px;top:119.8px;font-size:10.5px;color:#3a3a3a;transform:scaleX(0.916);">výkop:Hloubka výkopu 750 mm</div>

<div class="a" id="ledge"></div>
<div class="a" id="redge"></div>
</body>
</html>
